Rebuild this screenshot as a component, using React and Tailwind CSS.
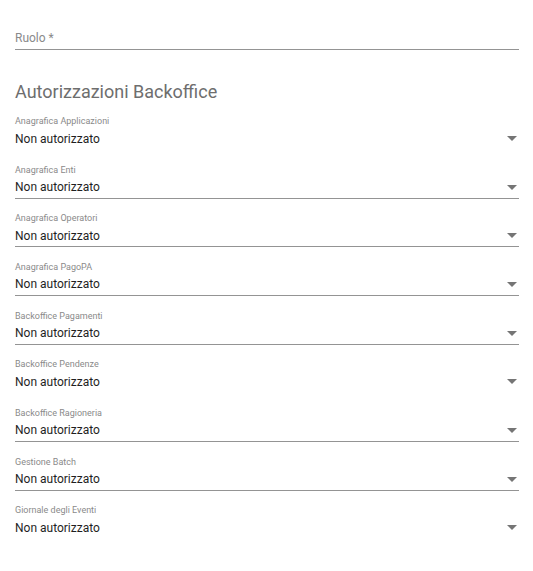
const fields = [
  { label: "Anagrafica Applicazioni", line: false },
  { label: "Anagrafica Enti", line: true },
  { label: "Anagrafica Operatori", line: true },
  { label: "Anagrafica PagoPA", line: true },
  { label: "Backoffice Pagamenti", line: true },
  { label: "Backoffice Pendenze", line: false },
  { label: "Backoffice Ragioneria", line: true },
  { label: "Gestione Batch", line: true },
  { label: "Giornale degli Eventi", line: false },
];

function Arrow() {
  return (
    <svg width="10" height="5" viewBox="0 0 10 5" className="shrink-0">
      <path d="M0 0 L10 0 L5 5 Z" fill="#757575" />
    </svg>
  );
}

function SelectField({ label, line }) {
  return (
    <div className="h-[48.67px]">
      <div className="h-[14px] flex items-center text-[9px] leading-[14px] text-[#8a8a8a]">
        {label}
      </div>
      <div
        className={`h-[22px] flex items-center justify-between pr-[2px] border-b ${
          line ? "border-[#949494]" : "border-transparent"
        }`}
      >
        <span className="text-[12px] text-[#1f1f1f]">Non autorizzato</span>
        <Arrow />
      </div>
    </div>
  );
}

export default function App() {
  return (
    <div
      className="w-[533px] h-[571px] bg-white pl-[15px] pr-[14px] pt-[29px]"
      style={{ fontFamily: "Roboto, 'Liberation Sans', sans-serif" }}
    >
      {/* Ruolo input */}
      <div className="h-[21px] border-b border-[#949494] flex items-start">
        <span className="text-[12px] leading-[18px] text-[#8a8a8a]">Ruolo *</span>
      </div>

      <h2 className="mt-[31px] text-[18px] leading-[22px] text-[#6e6e6e]">
        Autorizzazioni Backoffice
      </h2>

      <div className="mt-[11px]">
        {fields.map((f) => (
          <SelectField key={f.label} label={f.label} line={f.line} />
        ))}
      </div>
    </div>
  );
}
